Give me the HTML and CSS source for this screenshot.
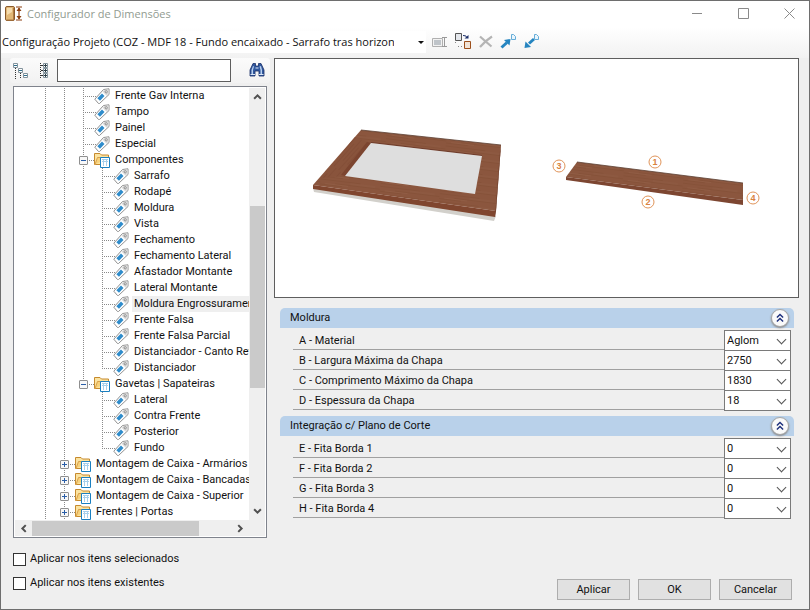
FILE: index.html
```html
<!DOCTYPE html>
<html lang="pt-BR">
<head>
    <meta charset="UTF-8">
    <meta name="viewport" content="width=device-width, initial-scale=1.0">
    <title>Configurador de Dimensões</title>
    <link rel="stylesheet" href="styles.css">
</head>
<body>

<!-- Shared icons -->
<svg class="sprite" aria-hidden="true">
    <symbol id="tag" viewBox="0 0 16 16">
        <path d="M.8 11.200 L9.500 1.500 L15 .800 V6.500 L5.500 15.500 H4.500 Z" fill="#fff" stroke="#8f8f8f" stroke-linejoin="round"/>
        <path d="M10 2 L14.500 1.500 V6 L12.500 7.800 L8.500 3.800 Z" fill="#dcdcdc"/>
        <path d="M8 5.500 L10.500 8 L6 12.800 L3.300 10.300 Z" fill="#2f8ccb"/>
        <circle cx="12.200" cy="3.800" r="1.100" fill="#fff" stroke="#777" stroke-width=".8"/>
    </symbol>
    <symbol id="folder" viewBox="0 0 16 16">
        <path d="M.5 12.500 V1.500 H6 L7.500 3 H14.500 V12.500 Z" fill="#fbe3a0" stroke="#c68a2e"/>
        <path d="M1 12.500 L3.500 5.500 H15" fill="#f7d27c" stroke="#d9a04a"/>
        <path d="M6.500 5.500 H15.500 V15.500 H6.500 Z" fill="#fff" stroke="#1a7fc0"/>
        <path d="M8 7.500 H14 M8 9.500 H14 M9.500 8 V14 M12.500 8 V14" stroke="#a5cfec"/>
    </symbol>
    <symbol id="chevrons" viewBox="0 0 18 18">
        <path d="M5.500 8.500 L9 5 L12.500 8.500 M5.500 13 L9 9.500 L12.500 13" fill="none" stroke="#1d2f7c" stroke-width="1.600"/>
    </symbol>
    <symbol id="arrow" viewBox="0 0 8 6">
        <path d="M1 5 L4 2 L7 5" fill="none" stroke="#505050" stroke-width="1.800"/>
    </symbol>
</svg>

<div class="window">
    <div class="top">
        <header class="titlebar">
            <svg class="app-icon" viewBox="0 0 17 16" aria-hidden="true">
                <rect x=".5" y=".5" width="9" height="14" rx="1.500" fill="#e2b877" stroke="#8a5a2c"/>
                <path d="M2 2 H7 V6 L2 9 Z" fill="#f5dcae"/>
                <path d="M8.500 2 V14 H2" fill="none" stroke="#b07a40"/>
                <path d="M11 1 H17 M11 14 H17 M14 2 V13" stroke="#8b3f10" stroke-width="1.200"/>
                <path d="M14 1.500 L16.500 5 H11.500 Z M14 13.500 L16.500 10 H11.500 Z" fill="#8b3f10"/>
            </svg>
            <h1>Configurador de Dimensões</h1>
            <div class="window-buttons">
                <button type="button" aria-label="Minimizar"><svg viewBox="0 0 11 11"><path d="M0 5.500 H10"/></svg></button>
                <button type="button" aria-label="Maximizar"><svg viewBox="0 0 11 11"><path d="M.5 .5 H10.500 V10.500 H.5 Z"/></svg></button>
                <button type="button" aria-label="Fechar"><svg viewBox="0 0 11 11"><path d="M.5 .5 L10.500 10.500 M10.500 .5 L.5 10.500"/></svg></button>
            </div>
        </header>

        <div class="toolbar">
            <div class="project">
                <select aria-label="Configuração">
                    <option>Configuração Projeto (COZ - MDF 18 - Fundo encaixado - Sarrafo tras horizontal)</option>
                </select>
            </div>
            <button type="button" aria-label="Renomear">
                <svg viewBox="0 0 18 18">
                    <path d="M1.500 5.500 H11.500 V13.500 H1.500 Z" fill="#f2f2f2" stroke="#b0b0b0"/>
                    <path d="M3 7 H10 V12 H3 Z" fill="#bfc4c9"/>
                    <path d="M11 4.500 H16 M11 13.500 H16 M13.500 5 V13" stroke="#999"/>
                </svg>
            </button>
            <button type="button" aria-label="Duplicar">
                <svg viewBox="0 0 18 18">
                    <path d="M1.500 .5 H7.500 V7.500 H1.500 Z" fill="#e4e7ec" stroke="#555"/>
                    <path d="M10.500 8.500 H16.500 V15.500 H10.500 Z" fill="#f1e3d6" stroke="#9c4f1c"/>
                    <path d="M9 2.500 Q12.500 2 13 5" fill="none" stroke="#1c2f6b"/>
                    <path d="M10.500 5.500 H14.500 V2 Z" fill="#1c2f6b"/>
                    <path d="M1.500 9 V10 M4 13.500 H10" stroke="#888" stroke-dasharray="1 2"/>
                </svg>
            </button>
            <button type="button" aria-label="Excluir">
                <svg viewBox="0 0 18 18">
                    <path d="M3 3.500 Q8 8 14.500 13.500 M15 3.500 Q8 8 3 14" fill="none" stroke="#b4b4b4" stroke-width="2.200"/>
                </svg>
            </button>
            <button type="button" aria-label="Exportar">
                <svg viewBox="0 0 18 18">
                    <path d="M1.500 14.500 L7 9.500" stroke="#2484c0" stroke-width="3"/>
                    <path d="M4 7 L10.500 6 L9.500 12.500 Z" fill="#2484c0"/>
                    <path d="M11.500 1.500 H13.500 L15.500 3.500 V6.500 H11.500 Z" fill="#eaf5fc" stroke="#65add8"/>
                </svg>
            </button>
            <button type="button" aria-label="Importar">
                <svg viewBox="0 0 18 18">
                    <path d="M11 6 L6 10.500" stroke="#2484c0" stroke-width="3"/>
                    <path d="M1.500 15 L2.500 8.500 L8 14 Z" fill="#2484c0"/>
                    <path d="M11.500 1.500 H13.500 L15.500 3.500 V6.500 H11.500 Z" fill="#eaf5fc" stroke="#65add8"/>
                </svg>
            </button>
        </div>
    </div>

    <main class="content">
        <section class="sidebar">
            <div class="search-bar">
                <button type="button" aria-label="Recolher tudo">
                    <svg viewBox="0 0 16 16">
                        <path d="M2.500 5 V16 M7.500 10 V16" stroke="#333" stroke-dasharray="1 1"/>
                        <path d="M5 6.500 H6 M10 12.500 H11" stroke="#333"/>
                        <path d="M.5 .5 H4.500 V4.500 H.5 Z M5.500 5.500 H9.500 V9.500 H5.500 Z M10.500 10.500 H14.500 V14.500 H10.500 Z" fill="#fff" stroke="#83939c"/>
                        <path d="M1 2.500 H4 M6 7.500 H9 M11 12.500 H14" stroke="#2e6f8e"/>
                    </svg>
                </button>
                <button type="button" aria-label="Expandir tudo">
                    <svg viewBox="-3 0 16 16">
                        <path d="M2.500 0 V16" stroke="#333" stroke-dasharray="1 1"/>
                        <path d="M3 2.500 H5 M3 7.500 H5 M3 12.500 H5" stroke="#333"/>
                        <path d="M5.500 .5 H9.500 V4.500 H5.500 Z M5.500 5.500 H9.500 V9.500 H5.500 Z M5.500 10.500 H9.500 V14.500 H5.500 Z" fill="#fff" stroke="#83939c"/>
                        <path d="M6 2.500 H9 M6 7.500 H9 M6 12.500 H9 M7.500 1 V4 M7.500 6 V9 M7.500 11 V14" stroke="#2b3d46"/>
                    </svg>
                </button>
                <input type="text" aria-label="Pesquisar">
                <button type="button" aria-label="Localizar">
                    <svg viewBox="0 0 16 16">
                        <path d="M4 .5 H6.500 V3 H9.500 V.5 H12 L15 7 V13 H10 V8 H6 V13 H1 V7 Z" fill="#31599f" stroke="#1b2f66" stroke-width=".8"/>
                        <path d="M4 3 L2.500 7 V11 H4 V7 L5 3.500 Z M10.500 3.500 L11.500 7 V11 H13 V7 L12 3 Z" fill="#b9d0ee"/>
                        <path d="M6.500 5 H9.500 M1.500 11.500 H6 M10 11.500 H14.500" stroke="#dbe6f5"/>
                    </svg>
                </button>
            </div>

            <div class="tree">
                <div class="tree-view">
                    <ul>
                        <li><ul>
                            <li><ul>
                                <li><div class="row leaf"><svg><use href="#tag"/></svg><span>Frente Gav Interna</span></div></li>
                                <li><div class="row leaf"><svg><use href="#tag"/></svg><span>Tampo</span></div></li>
                                <li><div class="row leaf"><svg><use href="#tag"/></svg><span>Painel</span></div></li>
                                <li><div class="row leaf"><svg><use href="#tag"/></svg><span>Especial</span></div></li>
                                <li>
                                    <div class="row"><button type="button" class="toggle open" aria-label="Recolher"></button><svg><use href="#folder"/></svg><span>Componentes</span></div>
                                    <ul>
                                        <li><div class="row leaf"><svg><use href="#tag"/></svg><span>Sarrafo</span></div></li>
                                        <li><div class="row leaf"><svg><use href="#tag"/></svg><span>Rodapé</span></div></li>
                                        <li><div class="row leaf"><svg><use href="#tag"/></svg><span>Moldura</span></div></li>
                                        <li><div class="row leaf"><svg><use href="#tag"/></svg><span>Vista</span></div></li>
                                        <li><div class="row leaf"><svg><use href="#tag"/></svg><span>Fechamento</span></div></li>
                                        <li><div class="row leaf"><svg><use href="#tag"/></svg><span>Fechamento Lateral</span></div></li>
                                        <li><div class="row leaf"><svg><use href="#tag"/></svg><span>Afastador Montante</span></div></li>
                                        <li><div class="row leaf"><svg><use href="#tag"/></svg><span>Lateral Montante</span></div></li>
                                        <li><div class="row leaf selected"><svg><use href="#tag"/></svg><span>Moldura Engrossuramento</span></div></li>
                                        <li><div class="row leaf"><svg><use href="#tag"/></svg><span>Frente Falsa</span></div></li>
                                        <li><div class="row leaf"><svg><use href="#tag"/></svg><span>Frente Falsa Parcial</span></div></li>
                                        <li><div class="row leaf"><svg><use href="#tag"/></svg><span>Distanciador - Canto Reto</span></div></li>
                                        <li><div class="row leaf"><svg><use href="#tag"/></svg><span>Distanciador</span></div></li>
                                    </ul>
                                </li>
                                <li>
                                    <div class="row"><button type="button" class="toggle open" aria-label="Recolher"></button><svg><use href="#folder"/></svg><span>Gavetas | Sapateiras</span></div>
                                    <ul>
                                        <li><div class="row leaf"><svg><use href="#tag"/></svg><span>Lateral</span></div></li>
                                        <li><div class="row leaf"><svg><use href="#tag"/></svg><span>Contra Frente</span></div></li>
                                        <li><div class="row leaf"><svg><use href="#tag"/></svg><span>Posterior</span></div></li>
                                        <li><div class="row leaf"><svg><use href="#tag"/></svg><span>Fundo</span></div></li>
                                    </ul>
                                </li>
                            </ul></li>
                            <li><div class="row"><button type="button" class="toggle" aria-label="Expandir"></button><svg><use href="#folder"/></svg><span>Montagem de Caixa - Armários</span></div></li>
                            <li><div class="row"><button type="button" class="toggle" aria-label="Expandir"></button><svg><use href="#folder"/></svg><span>Montagem de Caixa - Bancadas</span></div></li>
                            <li><div class="row"><button type="button" class="toggle" aria-label="Expandir"></button><svg><use href="#folder"/></svg><span>Montagem de Caixa - Superior</span></div></li>
                            <li><div class="row"><button type="button" class="toggle" aria-label="Expandir"></button><svg><use href="#folder"/></svg><span>Frentes | Portas</span></div></li>
                        </ul></li>
                    </ul>
                </div>
                <div class="scroll-y">
                    <svg class="up"><use href="#arrow"/></svg>
                    <div class="track"><div class="thumb"></div></div>
                    <svg class="down"><use href="#arrow"/></svg>
                </div>
                <div class="scroll-x">
                    <svg class="left"><use href="#arrow"/></svg>
                    <div class="track"><div class="thumb"></div></div>
                    <svg class="right"><use href="#arrow"/></svg>
                </div>
            </div>
        </section>

        <section class="details">
            <div class="preview">
                <svg viewBox="0 0 523 238" role="img" aria-label="Moldura">
                    <defs>
                        <pattern id="grain" width="60" height="8" patternUnits="userSpaceOnUse" patternTransform="rotate(7)">
                            <rect width="60" height="8" fill="#8b563e"/>
                            <path d="M0 1.500 H40 M15 4.500 H60 M0 6.500 H22" stroke="#845037" stroke-width=".7"/>
                            <path d="M30 3 H55 M5 5.500 H28" stroke="#925e46" stroke-width=".7"/>
                        </pattern>
                        <pattern id="grain-side" width="40" height="6" patternUnits="userSpaceOnUse" patternTransform="rotate(-48)">
                            <rect width="40" height="6" fill="#89543c"/>
                            <path d="M0 1.500 H30 M10 4.500 H40" stroke="#824d36" stroke-width=".7"/>
                        </pattern>
                    </defs>
                    <path d="M38 129 L39 133 L219 162 L221 157 Z" fill="#d2d0cb"/>
                    <path d="M86 71 L226 86 L221 152 L38 126 Z" fill="url(#grain)"/>
                    <path d="M38 126 L221 152 L220 158 L38 130 Z" fill="#80462f"/>
                    <path d="M226 86 L221 152 L220 158 L225 92 Z" fill="#6e3d2a"/>
                    <path d="M80 78 L96 84 L70 117 L46 119 Z" fill="url(#grain-side)"/>
                    <path d="M92 83 L96 84 L71 117 L66 116 Z" fill="#7c4530"/>
                    <path d="M96 83 L207 96 L207 97 L96 84 Z" fill="#6e3d2d"/>
                    <path d="M96 84 L207 97 L200 135 L70 117 Z" fill="#dedede"/>
                    <path d="M86 71 L226 86" stroke="#5c4033" stroke-width=".8"/>
                    <path d="M302 103 L468 124 V141 L291 118 Z" fill="url(#grain)"/>
                    <path d="M291 118 L468 141 V146 L291 121 Z" fill="#7d4631"/>
                    <path d="M302 103 L468 124" stroke="#5c4033" stroke-width=".8"/>
                    <g class="marks">
                        <circle cx="380" cy="103" r="6"/><text x="380" y="106">1</text>
                        <circle cx="373" cy="143" r="6"/><text x="373" y="146">2</text>
                        <circle cx="284" cy="107" r="6"/><text x="284" y="110">3</text>
                        <circle cx="478" cy="139" r="6"/><text x="478" y="142">4</text>
                    </g>
                </svg>
            </div>

            <div class="groups">
                <section class="group">
                    <header>
                        <h2>Moldura</h2>
                        <button type="button" aria-label="Recolher Moldura"><svg><use href="#chevrons"/></svg></button>
                    </header>
                    <div class="field"><label for="material">A - Material</label><select id="material"><option>Aglom</option></select></div>
                    <div class="field"><label for="largura">B - Largura Máxima da Chapa</label><select id="largura"><option>2750</option></select></div>
                    <div class="field"><label for="comprimento">C - Comprimento Máximo da Chapa</label><select id="comprimento"><option>1830</option></select></div>
                    <div class="field"><label for="espessura">D - Espessura da Chapa</label><select id="espessura"><option>18</option></select></div>
                </section>

                <section class="group">
                    <header>
                        <h2>Integração c/ Plano de Corte</h2>
                        <button type="button" aria-label="Recolher Integração"><svg><use href="#chevrons"/></svg></button>
                    </header>
                    <div class="field"><label for="fita1">E - Fita Borda 1</label><select id="fita1"><option>0</option></select></div>
                    <div class="field"><label for="fita2">F - Fita Borda 2</label><select id="fita2"><option>0</option></select></div>
                    <div class="field"><label for="fita3">G - Fita Borda 3</label><select id="fita3"><option>0</option></select></div>
                    <div class="field"><label for="fita4">H - Fita Borda 4</label><select id="fita4"><option>0</option></select></div>
                </section>
            </div>
        </section>
    </main>

    <footer class="footer">
        <div class="options">
            <label><input type="checkbox">Aplicar nos itens selecionados</label>
            <label><input type="checkbox">Aplicar nos itens existentes</label>
        </div>
        <div class="actions">
            <button type="button">Aplicar</button>
            <button type="button">OK</button>
            <button type="button">Cancelar</button>
        </div>
    </footer>
</div>

</body>
</html>
```
FILE: styles.css
```css
* {
    box-sizing: border-box;
}

body {
    margin: 0;
    background: #efefef;
    color: #111;
    font-family: Roboto, "Liberation Sans", sans-serif;
    font-size: 11px;
    line-height: 16px;
}

h1, h2, ul {
    margin: 0;
    padding: 0;
    font-size: 11px;
    font-weight: normal;
}

button, select, input {
    margin: 0;
    padding: 0;
    border: 0;
    border-radius: 0;
    background: none;
    color: inherit;
    font: inherit;
}

svg {
    display: block;
}

.sprite {
    display: none;
}

.window {
    min-height: 100vh;
    border: 1px solid #6e6e6e;
}

/* Title bar and toolbar */
.top {
    background: linear-gradient(#fff 26px, #f2f2f2);
}

.titlebar {
    display: flex;
    align-items: center;
    height: 25px;
    padding-left: 4px;
    font-family: "Open Sans", "Noto Sans", sans-serif;
}

.app-icon {
    width: 17px;
    height: 16px;
}

.titlebar h1 {
    flex: 1;
    padding-left: 5px;
    color: #919b91;
}

.window-buttons {
    display: flex;
    gap: 6px;
}

.window-buttons button {
    display: grid;
    place-items: center;
    width: 40px;
    height: 24px;
}

.window-buttons svg {
    width: 11px;
    height: 11px;
    fill: none;
    stroke: #8a8a8a;
}

.toolbar {
    display: flex;
    align-items: center;
    gap: 5px;
    height: 32px;
}

.project {
    width: 425px;
    position: relative;
    background: #fff;
}

.project select {
    display: block;
    width: 100%;
    height: 22px;
    padding: 0 32px 0 1px;
    appearance: none;
    font-family: "Open Sans", "Noto Sans", sans-serif;
}

.project::after {
    content: "";
    position: absolute;
    top: 10px;
    right: 2px;
    border: 3px solid transparent;
    border-top-color: #111;
    border-bottom: 0;
}

.toolbar svg {
    width: 18px;
    height: 18px;
}

/* Main area */
.content {
    display: flex;
    align-items: flex-start;
    gap: 4px;
    padding: 0 10px 0 9px;
}

.sidebar {
    width: 260px;
}

.search-bar {
    display: flex;
    align-items: center;
    gap: 6px;
    height: 25px;
    padding: 0 5px 0 3px;
    border-radius: 3px;
    background: linear-gradient(#fbfbfb, #f2f2f2);
}

.search-bar svg {
    width: 16px;
    height: 16px;
}

.search-bar input {
    flex: 1;
    min-width: 0;
    height: 23px;
    margin-right: 12px;
    padding: 0 4px;
    border: 1px solid #5e5e5e;
    background: #fff;
}

/* Tree */
.tree {
    display: grid;
    grid-template-columns: 1fr 16px;
    margin: 3px 3px 0;
    padding: 1px;
    border: 1px solid #7f838c;
    background: #fff;
}

.tree-view {
    overflow: hidden;
    padding-left: 26px;
}

.tree-view li {
    position: relative;
    list-style: none;
}

.tree-view li li {
    margin-left: 19px;
}

.tree-view li::before {
    content: "";
    position: absolute;
    top: 0;
    bottom: 0;
    left: 4px;
    width: 1px;
    background: repeating-linear-gradient(#8a8a8a 0 1px, #fff 1px 2px);
}

.tree-view li li li:last-child::before {
    bottom: auto;
    height: 9px;
}

.row {
    display: flex;
    align-items: center;
    position: relative;
    height: 16px;
    white-space: nowrap;
}

.row::before {
    content: "";
    position: absolute;
    top: 8px;
    left: 5px;
    width: 12px;
    height: 1px;
    background: repeating-linear-gradient(90deg, #fff 0 1px, #8a8a8a 1px 2px);
}

.row svg {
    position: relative;
    flex: none;
    width: 16px;
    height: 16px;
    margin-left: 6px;
}

.leaf svg {
    margin-left: 15px;
}

.row span {
    flex: 1;
    margin-left: 3px;
    padding-left: 2px;
}

.selected span {
    background: #efefef;
}

.toggle {
    position: relative;
    flex: none;
    width: 9px;
    height: 9px;
    border: 1px solid #8f8f8f;
    border-radius: 1px;
    background:
        linear-gradient(#2a5ea8, #2a5ea8) center / 5px 1px no-repeat,
        linear-gradient(#2a5ea8, #2a5ea8) center / 1px 5px no-repeat,
        #f8f8f8;
}

.toggle.open {
    background: linear-gradient(#2a5ea8, #2a5ea8) center / 5px 1px no-repeat, #f8f8f8;
}

.scroll-y, .scroll-x {
    display: flex;
    align-items: center;
    justify-content: space-between;
    background: #efefef;
}

.scroll-y {
    flex-direction: column;
    padding: 5px 0;
}

.scroll-x {
    grid-column: 1 / 3;
    height: 16px;
    padding: 0 20px 0 4px;
}

.scroll-y svg, .scroll-x svg {
    width: 9px;
    height: 7px;
}

.down {
    transform: rotate(180deg);
}

.left {
    transform: rotate(-90deg);
}

.right {
    transform: rotate(90deg);
}

.track {
    display: flex;
    flex: 1;
}

.scroll-y .track {
    flex-direction: column;
    width: 15px;
    padding-top: 106px;
}

.scroll-x .track {
    height: 15px;
    padding-left: 4px;
}

.thumb {
    background: #cacaca;
}

.scroll-y .thumb {
    height: 182px;
}

.scroll-x .thumb {
    width: 82%;
}

/* Preview */
.details {
    flex: 1;
    min-width: 0;
}

.preview {
    border: 1px solid #5e5e5e;
    background: #fff;
}

.preview svg {
    width: 100%;
}

.marks circle {
    fill: #fff;
    stroke: #e0945a;
}

.marks text {
    fill: #d9823f;
    font: bold 9px "Liberation Sans", sans-serif;
    text-anchor: middle;
}

/* Dimension groups */
.groups {
    padding: 10px 5px 0 6px;
}

.group {
    margin-bottom: 6px;
}

.group header {
    display: flex;
    align-items: center;
    justify-content: space-between;
    height: 20px;
    margin-bottom: 2px;
    padding: 0 5px 0 10px;
    border-radius: 5px 5px 0 0;
    background: #b9d1ea;
}

.group header button {
    width: 18px;
    height: 18px;
    border: 1px solid #a6a6a6;
    border-radius: 50%;
    background: #fafafa;
    box-shadow: 0 1px 2px #888;
}

.group header svg {
    width: 16px;
    height: 16px;
}

.field {
    display: flex;
    position: relative;
    height: 20px;
    margin: 0 3px 0 13px;
}

.field label {
    flex: 1;
    padding: 3px 6px 0;
    border-bottom: 1px solid #a0a0a0;
}

.field select {
    width: 67px;
    height: 21px;
    padding: 0 2px;
    border: 1px solid #7a7a7a;
    appearance: none;
    background: #fff;
}

.field::after {
    content: "";
    position: absolute;
    top: 6px;
    right: 6px;
    width: 6px;
    height: 6px;
    border: solid #555;
    border-width: 0 1px 1px 0;
    transform: rotate(45deg);
    pointer-events: none;
}

/* Footer */
.footer {
    display: flex;
    align-items: flex-end;
    justify-content: space-between;
    padding: 9px 17px 9px 12px;
}

.options {
    padding-bottom: 5px;
}

.options label {
    display: flex;
    align-items: center;
    height: 24px;
}

.options input {
    width: 13px;
    height: 13px;
    margin-right: 4px;
    border: 1px solid #333;
    appearance: none;
    background: #fff;
}

.options input:checked {
    background: #333;
}

.actions {
    display: flex;
    gap: 8px;
}

.actions button {
    width: 73px;
    height: 21px;
    border: 1px solid #adadad;
    background: #e1e1e1;
}
```
